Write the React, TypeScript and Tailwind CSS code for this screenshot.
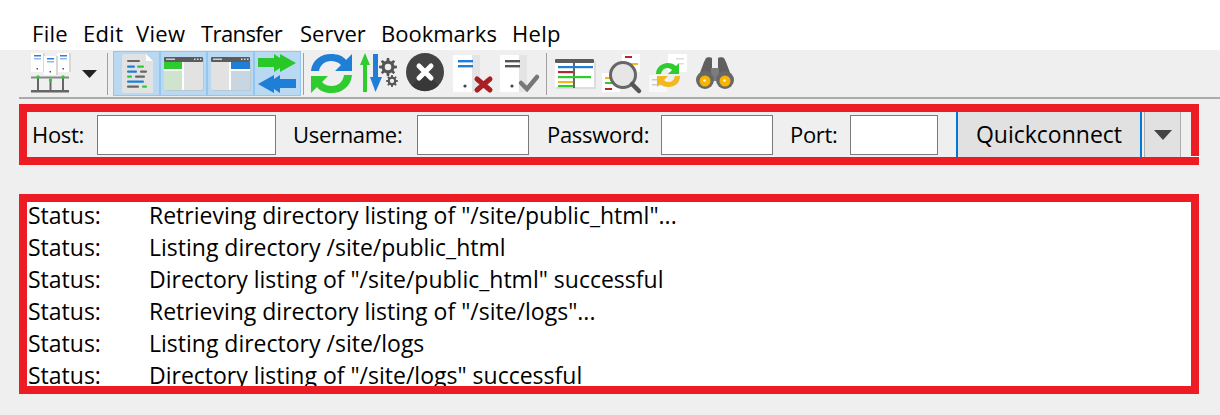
const font = { fontFamily: '"Open Sans", "Noto Sans", sans-serif' };

function SiteManager() {
  const server = (x: number, y: number) => (
    <g key={x}>
      <rect x={x + 2} y={y} width="12" height="19" fill="#d8d8d8" />
      <rect x={x} y={y} width="12" height="19" fill="#fff" />
      <rect x={x + 3} y={y + 2} width="7" height="1.5" fill="#2f7fd6" />
      <rect x={x + 3} y={y + 5} width="7" height="1.5" fill="#8fb8e4" />
      <rect x={x + 5.5} y={y + 15} width="1.5" height="1.5" fill="#555" />
    </g>
  );
  return (
    <svg width="47" height="47" viewBox="0 0 47 47" className="shrink-0">
      {server(4, 3)}
      {server(30, 3)}
      {server(17, 6)}
      <rect x="4" y="26.5" width="38" height="2" fill="#888" />
      <rect x="4" y="40" width="38" height="2.5" fill="#666" />
      <rect x="10" y="26" width="2" height="15" fill="#666" />
      <rect x="22.5" y="29" width="2" height="12" fill="#666" />
      <rect x="35" y="26" width="2" height="15" fill="#666" />
      <circle cx="11" cy="27" r="1.7" fill="#2ecc2e" />
      <circle cx="23.5" cy="30" r="1.7" fill="#2ecc2e" />
      <circle cx="36" cy="27" r="1.7" fill="#2ecc2e" />
    </svg>
  );
}

function Log() {
  return (
    <svg width="47" height="47" viewBox="-2 0 47 47" className="shrink-0">
      <path d="M9 4h22l7 7v32H9a2 2 0 0 1-2-2V6a2 2 0 0 1 2-2z" fill="#e2e2e2" />
      <path d="M31 4l7 7h-7z" fill="#fff" />
      <rect x="12" y="10" width="13" height="2" rx="1" fill="#666" />
      <rect x="12" y="15.500" width="8" height="2.200" rx="1" fill="#1f7ed6" />
      <rect x="22" y="15.500" width="7" height="2.200" rx="1" fill="#2ecc2e" />
      <rect x="12" y="20.500" width="10" height="2.200" rx="1" fill="#1f7ed6" />
      <rect x="25" y="20.500" width="7" height="2.200" rx="1" fill="#666" />
      <rect x="12" y="25.500" width="5" height="2.200" rx="1" fill="#2ecc2e" />
      <rect x="20" y="25.500" width="10" height="2.200" rx="1" fill="#666" />
      <rect x="12" y="30.500" width="17" height="2.200" rx="1" fill="#1f7ed6" />
      <rect x="12" y="35.500" width="12" height="2.200" rx="1" fill="#666" />
      <rect x="27" y="35.500" width="5" height="2.200" rx="1" fill="#2ecc2e" />
    </svg>
  );
}

function Pane({ side }: { side: "left" | "right" }) {
  return (
    <svg width="47" height="47" viewBox="-2 -2 47 47" className="shrink-0">
      <rect x="3" y="6" width="39" height="33" rx="2" fill="#bcbcbc" opacity="0.6" />
      <rect x="2" y="5" width="39" height="33" rx="2" fill="#e2e2e2" />
      <rect x="2" y="5" width="39" height="5" rx="1" fill="#5c5c5c" />
      <rect x="4" y="6.500" width="9" height="1.500" fill="#ccc" />
      <rect x="32" y="6.500" width="1.500" height="1.500" fill="#ddd" />
      <rect x="35" y="6.500" width="1.500" height="1.500" fill="#ddd" />
      <rect x="38" y="6.500" width="1.500" height="1.500" fill="#ddd" />
      {side === "left" ? (
        <>
          <rect x="2" y="10" width="18" height="7" fill="#2ecc2e" />
          <rect x="2" y="17" width="18" height="2" fill="#fff" />
          <rect x="2" y="19" width="18" height="19" fill="#cfe4cf" />
          <rect x="20" y="10" width="2" height="28" fill="#fff" />
        </>
      ) : (
        <>
          <rect x="20" y="10" width="2" height="28" fill="#fff" />
          <rect x="22" y="10" width="19" height="7" fill="#1f7ed6" />
          <rect x="22" y="17" width="19" height="2" fill="#fff" />
          <rect x="22" y="19" width="19" height="19" fill="#c8d6e2" />
        </>
      )}
    </svg>
  );
}

function Transfer() {
  return (
    <svg width="47" height="47" viewBox="0 0 47 47" className="shrink-0">
      <path d="M4 8H20V4L26 8V4L42 13L26 22V18L20 22V17H4Z" fill="#28c828" />
      <path d="M42 29H26V25L20 29V25L4 34L20 43V39L26 43V38H42Z" fill="#1f7ed6" />
    </svg>
  );
}

function Refresh() {
  return (
    <svg width="47" height="47" viewBox="0 0 47 47" className="shrink-0">
      <path d="M3 21C4 10 13 4 23 4c7 0 12 2 15 6l6-6v17H27l6-6c-3-3-6-4-10-4-6 0-11 4-12 10z" fill="#1f7ed6" />
      <path d="M44 25c-1 12-11 18-20 18-7 0-12-2-15-6l-6 6V26h17l-6 6c3 3 6 4 10 4 6 0 11-4 12-11z" fill="#2ecc2e" />
    </svg>
  );
}

function gearPath(cx: number, cy: number, r: number, teeth: number) {
  const pts: string[] = [];
  const step = (Math.PI * 2) / teeth;
  for (let i = 0; i < teeth; i++) {
    const a = i * step;
    [
      [a - step * 0.32, r * 0.72],
      [a - step * 0.16, r],
      [a + step * 0.16, r],
      [a + step * 0.32, r * 0.72],
    ].forEach(([t, q]) => {
      pts.push(`${(cx + Math.cos(t) * q).toFixed(2)} ${(cy + Math.sin(t) * q).toFixed(2)}`);
    });
  }
  return `M${pts.join("L")}Z`;
}

function Gear({ cx, cy, r }: { cx: number; cy: number; r: number }) {
  return (
    <g>
      <path d={gearPath(cx, cy, r, 8)} fill="#555" />
      <circle cx={cx} cy={cy} r={r * 0.36} fill="#efefef" />
    </g>
  );
}

function Queue() {
  return (
    <svg width="47" height="47" viewBox="0 0 47 47" className="shrink-0">
      <path d="M10 3l5 12h-3v27H8V15H5z" fill="#2ecc2e" />
      <path d="M18 4h5v23h4l-6.500 15L15 27h3z" fill="#1f7ed6" />
      <Gear cx={33} cy={17} r={9} />
      <Gear cx={37} cy={31} r={6} />
    </svg>
  );
}

function Cancel() {
  return (
    <svg width="47" height="47" viewBox="0 0 47 47" className="shrink-0">
      <circle cx="23" cy="22" r="19" fill="#444" />
      <path d="M23 22L9.500 35.500A19 19 0 0 0 36.500 35.500z" fill="#383838" />
      <path d="M17 16l12 12M29 16L17 28" fill="none" stroke="#fff" strokeWidth="5" strokeLinecap="round" />
    </svg>
  );
}

function ServerAction({ kind }: { kind: "x" | "check" }) {
  return (
    <svg width="47" height="47" viewBox="0 0 47 47" className="shrink-0">
      <rect x="4" y="5" width="27" height="37" fill="#e4e4e4" />
      <rect x="4" y="5" width="19" height="37" fill="#fff" />
      <rect x="9" y="10" width="15" height="2.400" fill={kind === "x" ? "#1f7ed6" : "#555"} />
      <rect x="9" y="15" width="15" height="2.400" fill={kind === "x" ? "#1f7ed6" : "#555"} />
      <circle cx="16" cy="36" r="1.600" fill="#444" />
      {kind === "x" ? (
        <path d="M28 29l13 11M41 29L28 40" stroke="#a81f24" strokeWidth="5" strokeLinecap="round" />
      ) : (
        <path d="M25 33l6 6 10-12" fill="none" stroke="#777" strokeWidth="4.500" strokeLinecap="round" />
      )}
    </svg>
  );
}

function Listing() {
  return (
    <svg width="47" height="47" viewBox="0 0 47 47" className="shrink-0">
      <rect x="4" y="11" width="40" height="28" fill="#ddd" />
      <rect x="3" y="9" width="39" height="28" fill="#fff" />
      <rect x="3" y="9" width="39" height="4" rx="1" fill="#5c5c5c" />
      <rect x="21" y="13" width="2" height="25" fill="#666" />
      <rect x="6" y="16" width="35" height="2.200" fill="#1f7ed6" />
      <rect x="6" y="21" width="15" height="2.200" fill="#b02a2a" />
      <rect x="6" y="26" width="33" height="2.200" fill="#2ecc2e" />
      <rect x="6" y="31" width="15" height="2.200" fill="#f3b81e" />
      <rect x="6" y="35" width="15" height="2.200" fill="#2ecc2e" />
    </svg>
  );
}

function Search() {
  return (
    <svg width="47" height="47" viewBox="0 0 47 47" className="shrink-0">
      <rect x="23" y="4" width="18" height="18" fill="#fff" />
      <rect x="26" y="6" width="7" height="2" fill="#b02a2a" />
      <rect x="30" y="13" width="9" height="2" fill="#f3b81e" />
      <rect x="3" y="23" width="18" height="19" fill="#fff" />
      <rect x="6" y="27" width="8" height="2" fill="#f3b81e" />
      <rect x="6" y="32" width="8" height="2" fill="#2ecc2e" />
      <rect x="6" y="38" width="7" height="2" fill="#b02a2a" />
      <circle cx="24" cy="25" r="12.500" fill="#e6e6e6" stroke="#666" strokeWidth="3" />
      <path d="M33 34l7 7" stroke="#555" strokeWidth="4.500" strokeLinecap="round" />
    </svg>
  );
}

function Compare() {
  return (
    <svg width="47" height="47" viewBox="0 0 47 47" className="shrink-0">
      <rect x="22" y="4" width="19" height="18" fill="#fff" />
      <rect x="30" y="8" width="8" height="1.500" fill="#ddd" />
      <rect x="33" y="13" width="5" height="1.500" fill="#ddd" />
      <rect x="3" y="25" width="18" height="17" fill="#f8f8f8" />
      <rect x="6" y="29" width="9" height="1.500" fill="#ccc" />
      <rect x="6" y="34" width="9" height="1.500" fill="#ccc" />
      <path d="M10 24c0-6 5-11 12-11 3 0 6 1 8 3l3-3v11H22l4-4c-1-1-3-2-4-2-4 0-6 2-7 6z" fill="#2ecc2e" />
      <path d="M34 26c0 7-5 11-12 11-3 0-6-1-8-3l-3 3V26h11l-4 4c1 1 3 2 4 2 4 0 6-2 7-6z" fill="#f3b81e" />
    </svg>
  );
}

function Binoculars() {
  return (
    <svg width="47" height="47" viewBox="0 0 47 47" className="shrink-0">
      <path d="M5 28L11 12l2-4c1-1 5-1 6 0v10h6V8c1-1 5-1 6 0l2 4 6 16z" fill="#5f5f5f" />
      <rect x="18" y="18" width="8" height="13" fill="#7c7c7c" />
      <circle cx="12" cy="30" r="9" fill="#686868" />
      <circle cx="32" cy="30" r="9" fill="#686868" />
      <circle cx="12" cy="31" r="5.500" fill="#f7b500" />
      <circle cx="32" cy="31" r="5.500" fill="#f7b500" />
      <circle cx="11.500" cy="30.500" r="1.300" fill="#fff" />
      <circle cx="31.500" cy="30.500" r="1.300" fill="#fff" />
    </svg>
  );
}

function Sep() {
  return <div className="w-px h-[42px] bg-[#a0a0a0] self-center shrink-0" />;
}

function Toggle({ children }: { children: React.ReactNode }) {
  return <div className="w-[47px] h-[45px] flex items-center justify-center bg-[#b9d9f3] border border-[#93c7f0] overflow-hidden">{children}</div>;
}

function Field({ label, labelW, inputW }: { label: string; labelW: string; inputW: string }) {
  return (
    <>
      <span className={`${labelW} text-[22px] tracking-[-0.3px]`}>{label}</span>
      <div className={`${inputW} h-10 bg-white border border-[#7a7a7a]`} />
    </>
  );
}

const logs = [
  'Retrieving directory listing of "/site/public_html"...',
  "Listing directory /site/public_html",
  'Directory listing of "/site/public_html" successful',
  'Retrieving directory listing of "/site/logs"...',
  "Listing directory /site/logs",
  'Directory listing of "/site/logs" successful',
];

const menus: [string, string][] = [
  ["File", "w-[51px] tracking-[0.3px]"],
  ["Edit", "w-[53px] tracking-[0.3px]"],
  ["View", "w-[65px] tracking-[0.3px]"],
  ["Transfer", "w-[99px] tracking-[-0.6px]"],
  ["Server", "w-[81px]"],
  ["Bookmarks", "w-[131px]"],
  ["Help", "w-[60px] tracking-[0.3px]"],
];

export default function App() {
  return (
    <div style={font} className="w-[1220px] h-[415px] overflow-hidden bg-[#efefef] text-[23px] text-black">
      <div className="h-[50px] bg-white flex items-center pl-8 pt-[16px] text-[22px]">
        {menus.map(([m, w]) => (
          <span key={m} className={w}>{m}</span>
        ))}
      </div>
      <div className="h-[49px] ml-[19px] border-b-2 border-[#ababab] flex items-center pl-2">
        <SiteManager />
        <svg width="33" height="47" viewBox="0 0 33 47" className="shrink-0">
          <path d="M8 20h15l-7.500 8z" fill="#222" />
        </svg>
        <Sep />
        <div className="flex ml-[5px]">
          <Toggle><Log /></Toggle>
          <Toggle><Pane side="left" /></Toggle>
          <Toggle><Pane side="right" /></Toggle>
          <Toggle><Transfer /></Toggle>
        </div>
        <div className="ml-[2px] mr-[4px] flex"><Sep /></div>
        <Refresh />
        <Queue />
        <Cancel />
        <ServerAction kind="x" />
        <ServerAction kind="check" />
        <div className="ml-[3px] mr-[5px] flex"><Sep /></div>
        <Listing />
        <Search />
        <Compare />
        <Binoculars />
      </div>
      <div className="relative mt-[5px] ml-[19px] w-[1180px] h-[61px] border-8 border-[#ed1c24] flex items-center pl-[5px]">
        <Field label="Host:" labelW="w-[65px]" inputW="w-[179px]" />
        <div className="w-[17px]" />
        <Field label="Username:" labelW="w-[124px]" inputW="w-[112px]" />
        <div className="w-[18px]" />
        <Field label="Password:" labelW="w-[114px]" inputW="w-[112px]" />
        <div className="w-[17px]" />
        <Field label="Port:" labelW="w-[60px]" inputW="w-[88px]" />
        <button className="ml-[18px] w-[186px] h-[45px] bg-[#e1e1e1] border-x-2 border-[#0078d7] flex items-center justify-center">Quickconnect</button>
        <div className="ml-[2px] w-[37px] h-[45px] bg-[#e1e1e1] border-x border-[#adadad] flex items-center justify-center">
          <svg width="20" height="12" viewBox="0 0 20 12"><path d="M1 1h18l-9 10z" fill="#444" /></svg>
        </div>
        <div className="absolute right-[-8px] bottom-0 w-2 h-px bg-white" />
      </div>
      <div className="mt-[29px] ml-[19px] w-[1180px] h-[200px] border-8 border-[#ed1c24] bg-white overflow-hidden">
        {logs.map((l) => (
          <div key={l} className="flex h-8 leading-[26px] whitespace-pre">
            <span className="w-[122px] pl-px">Status:</span>
            <span>{l}</span>
          </div>
        ))}
      </div>
    </div>
  );
}
